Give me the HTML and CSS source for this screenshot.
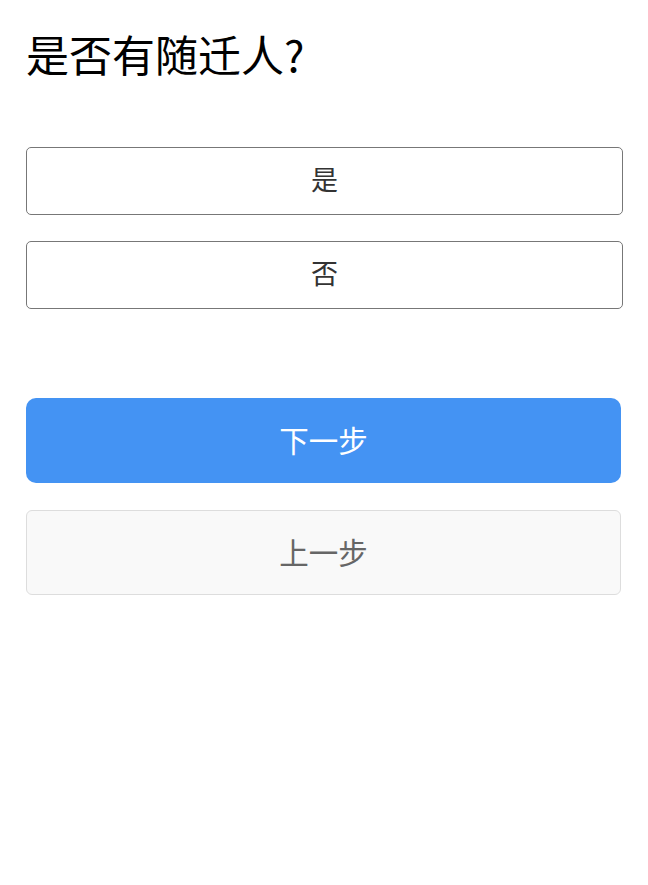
FILE: index.html
```html
<!DOCTYPE html>
<html lang="zh-CN">
<head>
<meta charset="utf-8">
<title>是否有随迁人？</title>
<link rel="stylesheet" href="styles.css">
</head>
<body>
<main class="page">
  <h1 class="question">是否有随迁人?</h1>
  <div class="options">
    <button class="option" type="button">是</button>
    <button class="option" type="button">否</button>
  </div>
  <div class="actions">
    <button class="btn btn-primary" type="button">下一步</button>
    <button class="btn btn-secondary" type="button">上一步</button>
  </div>
</main>
</body>
</html>
```
FILE: styles.css
```css
* { box-sizing: border-box; }
html, body {
  margin: 0;
  padding: 0;
  background: #fff;
}
body {
  font-family: "Noto Sans CJK SC", "Noto Sans", sans-serif;
  color: #000;
}
.page {
  padding: 26px 26px 0 26px;
}
.question {
  margin: 0;
  font-size: 43px;
  font-weight: 400;
  line-height: 54px;
  color: #000;
}
.options {
  margin-top: 67px;
  display: flex;
  flex-direction: column;
  gap: 26px;
  margin-right: -1px;
}
.option {
  height: 68px;
  border: 1px solid #777;
  border-radius: 5px;
  background: #fff;
  font-family: inherit;
  font-size: 27px;
  color: #333;
  padding: 0 0 5px 0;
}
.actions {
  margin-top: 89px;
  display: flex;
  flex-direction: column;
  gap: 27px;
  margin-right: 1px;
}
.btn {
  height: 85px;
  border-radius: 10px;
  font-family: inherit;
  font-size: 29.5px;
  padding: 0 0 4px 0;
}
.btn-primary {
  background: #4493f3;
  border: none;
  color: #fff;
}
.btn-secondary {
  background: #f9f9f9;
  border: 1px solid #ddd;
  border-radius: 6px;
  color: #666;
}
```
